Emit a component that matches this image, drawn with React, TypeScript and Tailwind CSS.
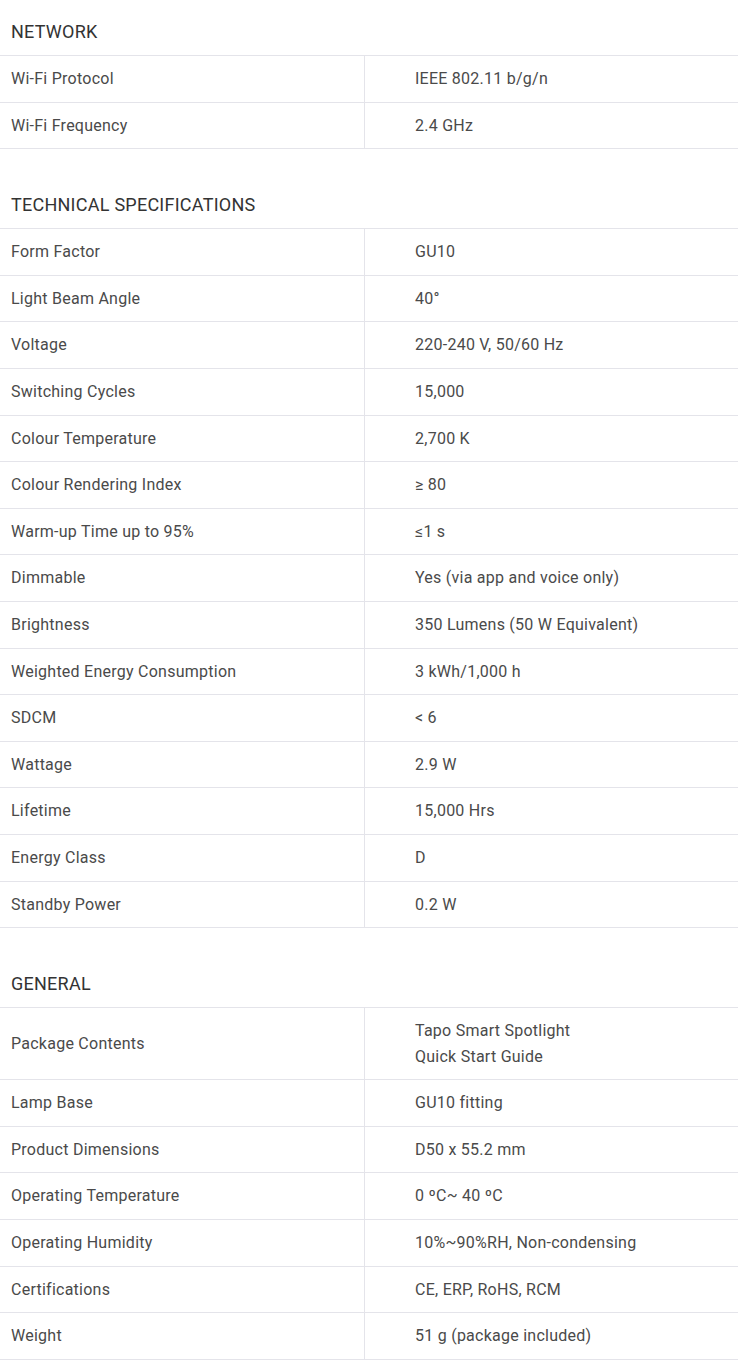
import React from 'react'

type Row = [string, string | string[]]

const sections: { title: string; rows: Row[] }[] = [
  {
    title: 'NETWORK',
    rows: [
      ['Wi-Fi Protocol', 'IEEE 802.11 b/g/n'],
      ['Wi-Fi Frequency', '2.4 GHz'],
    ],
  },
  {
    title: 'TECHNICAL SPECIFICATIONS',
    rows: [
      ['Form Factor', 'GU10'],
      ['Light Beam Angle', '40°'],
      ['Voltage', '220-240 V, 50/60 Hz'],
      ['Switching Cycles', '15,000'],
      ['Colour Temperature', '2,700 K'],
      ['Colour Rendering Index', '≥ 80'],
      ['Warm-up Time up to 95%', '≤1 s'],
      ['Dimmable', 'Yes (via app and voice only)'],
      ['Brightness', '350 Lumens (50 W Equivalent)'],
      ['Weighted Energy Consumption', '3 kWh/1,000 h'],
      ['SDCM', '< 6'],
      ['Wattage', '2.9 W'],
      ['Lifetime', '15,000 Hrs'],
      ['Energy Class', 'D'],
      ['Standby Power', '0.2 W'],
    ],
  },
  {
    title: 'GENERAL',
    rows: [
      ['Package Contents', ['Tapo Smart Spotlight', 'Quick Start Guide']],
      ['Lamp Base', 'GU10 fitting'],
      ['Product Dimensions', 'D50 x 55.2 mm'],
      ['Operating Temperature', '0 ºC~ 40 ºC'],
      ['Operating Humidity', '10%~90%RH, Non-condensing'],
      ['Certifications', 'CE, ERP, RoHS, RCM'],
      ['Weight', '51 g (package included)'],
    ],
  },
]

const SpecRow = ({ label, value }: { label: string; value: string | string[] }) => {
  const lines = Array.isArray(value) ? value : [value]
  return (
    <div className="flex border-b border-[#e4e4ea]">
      <div className="flex w-[365px] shrink-0 items-center border-r border-[#e4e4ea] px-[11px] py-[10px]">
        {label}
      </div>
      <div className="flex flex-col justify-center pl-[50px] pr-4 py-[10px]">
        {lines.map((line) => (
          <span key={line}>{line}</span>
        ))}
      </div>
    </div>
  )
}

export default function App() {
  return (
    <div className="w-[738px] bg-white font-['Roboto',sans-serif] text-[16px] leading-[25.6px] tracking-[0.25px] text-[#4a4a4a]">
      {sections.map((section, i) => (
        <section key={section.title} className={i > 0 ? 'mt-[24px]' : ''}>
          <h2 className="border-b border-[#e4e4ea] px-[11px] pt-[20px] pb-[11px] text-[18px] leading-[24px] text-[#333333]">
            {section.title}
          </h2>
          {section.rows.map(([label, value]) => (
            <SpecRow key={label} label={label} value={value} />
          ))}
        </section>
      ))}
    </div>
  )
}
